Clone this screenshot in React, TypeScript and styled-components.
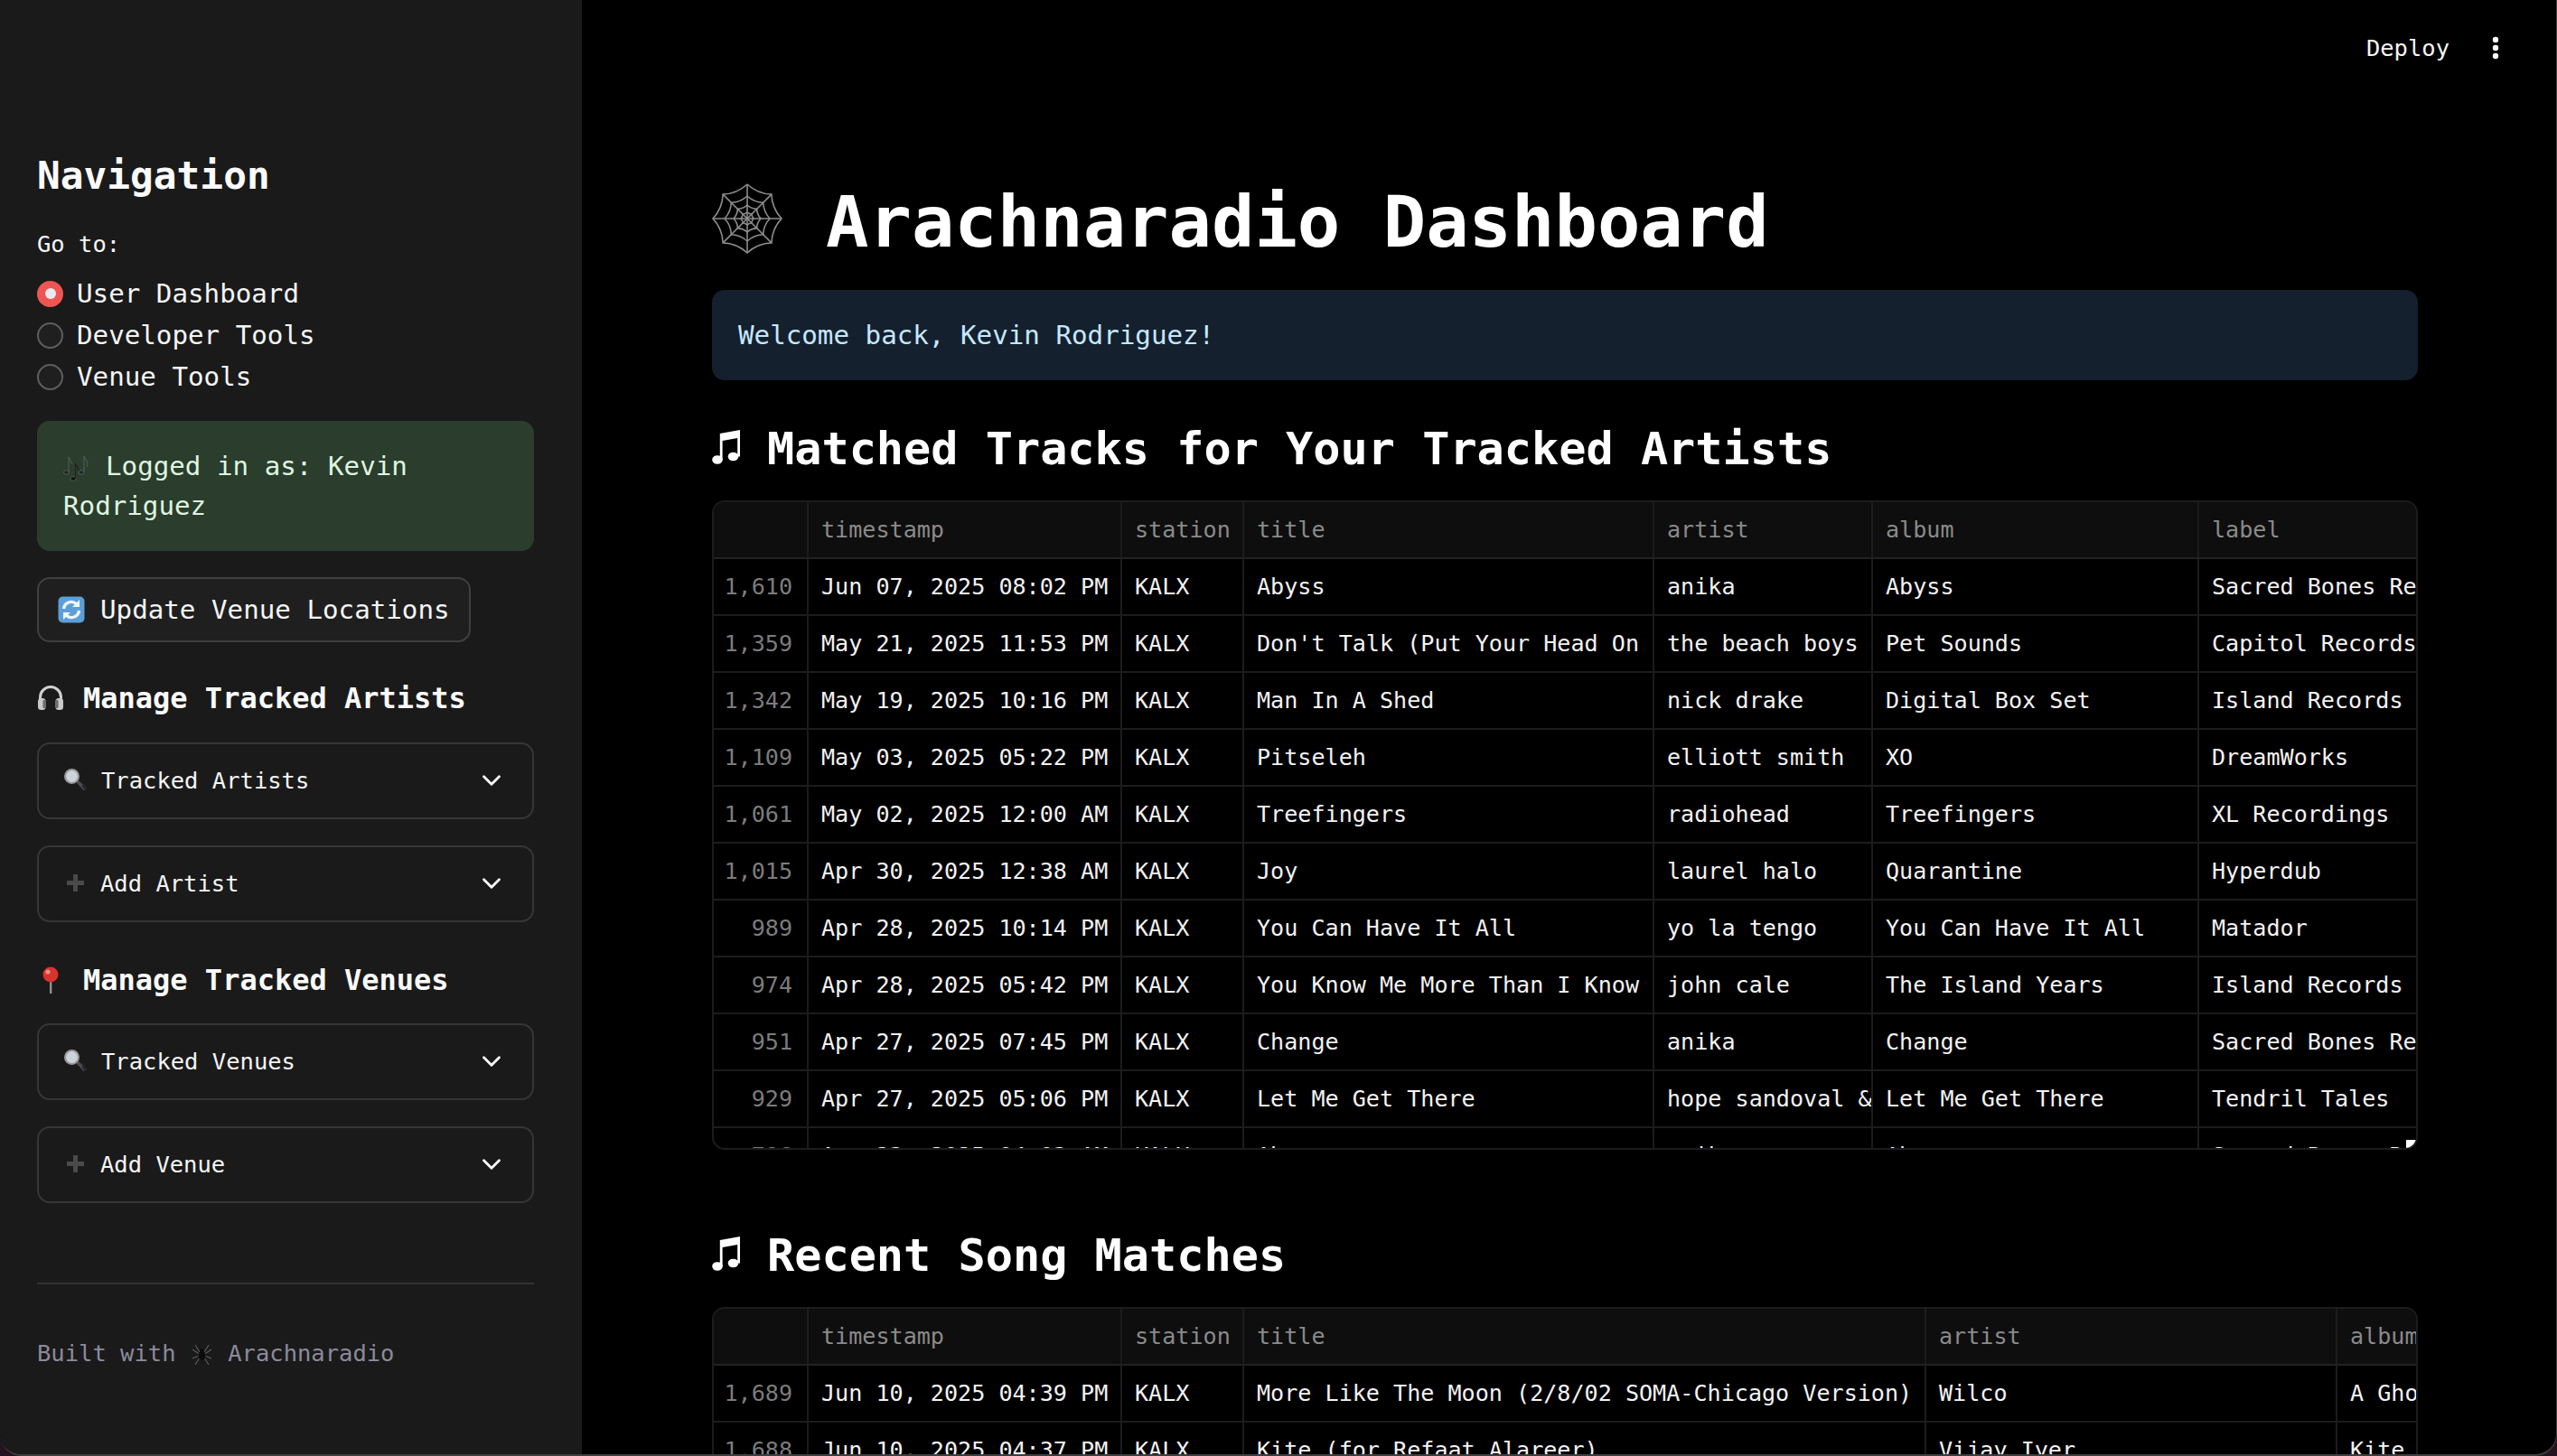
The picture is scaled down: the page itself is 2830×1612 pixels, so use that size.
import styled, { createGlobalStyle } from 'styled-components';
import { ChevronDown } from 'lucide-react';

const GlobalStyle = createGlobalStyle`
  html, body {
    margin: 0;
    height: 100%;
    background: #23141f;
    overflow: hidden;
  }
  * { box-sizing: border-box; }
  body {
    font-family: "DejaVu Sans Mono", "Liberation Mono", monospace;
    color: #f5f5f5;
  }
`;

const Frame = styled.div`
  width: 100vw;
  height: 100vh;
  display: flex;
  overflow: hidden;
  background: #000;
  border: solid #3e3e3e;
  border-width: 0 1px 2px 0;
  border-radius: 0 0 24px 24px;
`;

const Sidebar = styled.aside`
  flex: 0 0 644px;
  background: #1a1a1a;
  padding: 168px 53px 0 41px;
  display: flex;
  flex-direction: column;
`;

const NavTitle = styled.h2`
  margin: 0 0 35px;
  font-size: 42.8px;
  line-height: 52px;
  font-weight: 700;
  color: #fafafa;
`;

const GoTo = styled.div`
  font-size: 25.5px;
  line-height: 30px;
  margin-bottom: 17px;
`;

const RadioRow = styled.label`
  height: 46px;
  display: flex;
  align-items: center;
  gap: 15px;
  font-size: 29.2px;
`;

const RadioDot = styled.span<{ $on?: boolean }>`
  width: 29px;
  height: 29px;
  border-radius: 50%;
  display: grid;
  place-items: center;
  background: ${(p) => (p.$on ? '#ef5552' : '#1f1f1f')};
  border: ${(p) => (p.$on ? 'none' : '2px solid #5e5e5e')};

  &::after {
    content: '';
    display: ${(p) => (p.$on ? 'block' : 'none')};
    width: 12px;
    height: 12px;
    border-radius: 50%;
    background: #e9ebf1;
  }
`;

const LoggedIn = styled.div`
  margin-top: 26px;
  height: 144px;
  padding: 29px;
  border-radius: 14px;
  background: #2b3d2c;
  color: #dff5e0;
  font-size: 29.2px;
  line-height: 43.5px;
`;

const UpdateButton = styled.button`
  margin-top: 29px;
  align-self: flex-start;
  width: 480px;
  height: 72px;
  padding: 0 0 0 21px;
  display: flex;
  align-items: center;
  border: 2px solid #3f3f3f;
  border-radius: 14px;
  background: #1f1f1f;
  color: #f5f5f5;
  font: inherit;
  font-size: 29.2px;
`;

const SideHeading = styled.h3<{ $top: number }>`
  margin: ${(p) => p.$top}px 0 0;
  height: 44px;
  display: flex;
  align-items: center;
  font-size: 32px;
  font-weight: 700;
  color: #fafafa;
`;

const Expander = styled.div<{ $top: number }>`
  margin-top: ${(p) => p.$top}px;
  height: 85px;
  padding: 0 28px 2px 28px;
  display: flex;
  align-items: center;
  border: 2px solid #363636;
  border-radius: 14px;
  font-size: 25.5px;

  & > span { flex: 1; }
`;

const Divider = styled.hr`
  margin: 88px 0 0;
  border: 0;
  border-top: 2px solid #333;
`;

const Footer = styled.div`
  margin-top: 61px;
  height: 30px;
  display: flex;
  align-items: center;
  font-size: 25.5px;
  color: #8b8b9c;
`;

const Main = styled.main`
  flex: 1;
  min-width: 0;
  padding: 0 153px 0 144px;
  overflow: hidden;
`;

const TopBar = styled.header`
  height: 106px;
  margin-right: -153px;
  padding-right: 63px;
  display: flex;
  align-items: center;
  justify-content: flex-end;
  gap: 47px;
  font-size: 25.5px;
`;

const Title = styled.h1`
  margin: 94px 0 0;
  height: 92px;
  display: flex;
  align-items: center;
  font-size: 78.8px;
  line-height: 92px;
  font-weight: 700;
  color: #fff;
  white-space: nowrap;
`;

const Welcome = styled.div`
  margin-top: 29px;
  height: 100px;
  padding: 0 29px;
  display: flex;
  align-items: center;
  border-radius: 14px;
  background: #14202e;
  color: #c7e7fd;
  font-size: 29.2px;
`;

const SectionTitle = styled.h2<{ $top: number }>`
  margin: ${(p) => p.$top}px 0 0;
  height: 58px;
  display: flex;
  align-items: center;
  font-size: 50.2px;
  line-height: 58px;
  font-weight: 700;
  color: #fff;
`;

const GridBox = styled.div<{ $top: number }>`
  position: relative;
  margin-top: ${(p) => p.$top}px;
  height: 719px;
  border: 2px solid #1c1c1c;
  border-radius: 14px;
  overflow: hidden;
`;

const Corner = styled.span`
  position: absolute;
  right: 0;
  bottom: 0;
  width: 11px;
  height: 9px;
  background: #fff;
`;

const Grid = styled.table<{ $w: number }>`
  width: ${(p) => p.$w}px;
  border-collapse: separate;
  border-spacing: 0;
  table-layout: fixed;
  font-size: 25.1px;
`;

const Col = styled.col<{ $w: number }>`
  width: ${(p) => p.$w}px;
`;

const HeadCell = styled.th`
  height: 63px;
  padding: 0 0 0 14px;
  text-align: left;
  font-weight: 400;
  color: #8a8a8a;
  background: #0e0e0e;
  border-right: 2px solid #1c1c1c;
  border-bottom: 2px solid #222;
  white-space: nowrap;
  overflow: hidden;
`;

const Cell = styled.td`
  height: 63px;
  padding: 0 0 0 14px;
  color: #f3f3f3;
  border-right: 2px solid #1c1c1c;
  border-bottom: 2px solid #1c1c1c;
  white-space: nowrap;
  overflow: hidden;
`;

const IndexCell = styled(Cell)`
  padding: 0 16px 0 0;
  text-align: right;
  color: #7c7c7c;
`;

const Glyph = styled.svg<{ $gap?: number; $lift?: number; $lead?: number }>`
  flex: none;
  display: inline-block;
  vertical-align: middle;
  margin: 0 ${(p) => p.$gap ?? 0}px ${(p) => p.$lift ?? 0}px ${(p) => p.$lead ?? 0}px;
`;

const WebIcon = () => {
  const c = 39;
  const point = (r: number, i: number) => {
    const a = (i * Math.PI) / 4 - Math.PI / 2;
    return [c + r * Math.cos(a), c + r * Math.sin(a)];
  };
  const ring = (r: number) => {
    let d = '';
    for (let i = 0; i < 8; i++) {
      const [x, y] = point(r, i);
      const [qx, qy] = point(r * 0.78, i + 0.5);
      const [nx, ny] = point(r, i + 1);
      d += `${i === 0 ? `M${x} ${y}` : ''}Q${qx} ${qy} ${nx} ${ny}`;
    }
    return d;
  };
  return (
    <Glyph width={78} height={78} viewBox="0 0 78 78" $gap={48} $lift={8} fill="none" stroke="#8c8c8c" strokeWidth={1.6}>
      {[0, 1, 2, 3, 4, 5, 6, 7].map((i) => {
        const [x, y] = point(38, i);
        return <path key={i} d={`M39 39L${x} ${y}`} />;
      })}
      {[38, 25, 15, 7].map((r) => (
        <path key={r} d={ring(r)} />
      ))}
    </Glyph>
  );
};

const NotesIcon = ({ gap }: { gap: number }) => (
  <Glyph width={31} height={38} viewBox="0 0 31 38" $gap={gap} $lift={4} fill="#fff">
    <ellipse cx="6" cy="33" rx="5.8" ry="4.8" />
    <ellipse cx="23.5" cy="29.5" rx="5.8" ry="4.8" />
    <path d="M8.8 4L31 0V29.5h-2.8V9L11.6 12V33H8.800z" />
  </Glyph>
);

const TripleNotes = () => (
  <Glyph width={29} height={29} viewBox="0 0 29 29" $gap={18} fill="#23282a" stroke="#5d6a60" strokeWidth={0.8}>
    <ellipse cx="3.5" cy="19" rx="3" ry="2.4" />
    <path d="M6 19V2l4 8" fill="none" />
    <ellipse cx="11" cy="26" rx="3" ry="2.4" fill="#111" />
    <path d="M13.5 26V9l4 8" fill="none" stroke="#222" strokeWidth={1.2} />
    <ellipse cx="20" cy="19" rx="3" ry="2.4" />
    <path d="M23 18V1c1 4 6 6 3 12" fill="none" />
  </Glyph>
);

const RefreshIcon = () => (
  <Glyph width={30} height={30} viewBox="0 0 30 30" $gap={17}>
    <rect x="0.5" y="0.5" width="29" height="29" rx="5" fill="#5c9fd8" />
    <g fill="none" stroke="#eef5fb" strokeWidth={3.4}>
      <path d="M6.5 14a8.5 8.5 0 0 1 14-5.5" />
      <path d="M23.5 16a8.5 8.5 0 0 1-14 5.5" />
    </g>
    <path d="M24 4v8h-8zM6 26v-8h8z" fill="#eef5fb" />
  </Glyph>
);

const HeadphonesIcon = () => (
  <Glyph width={30} height={30} viewBox="0 0 30 30" $gap={21}>
    <path d="M3.5 18V14a11.5 11.5 0 0 1 23 0v4" fill="none" stroke="#d0d0d0" strokeWidth={3} />
    <rect x="1" y="15" width="8.5" height="13" rx="3.5" fill="#c9c9c9" />
    <rect x="20.5" y="15" width="8.5" height="13" rx="3.5" fill="#c9c9c9" />
    <rect x="6.5" y="17" width="3" height="9" rx="1" fill="#6a6a6a" />
    <rect x="20.5" y="17" width="3" height="9" rx="1" fill="#6a6a6a" />
  </Glyph>
);

const PinIcon = () => (
  <Glyph width={30} height={30} viewBox="0 0 30 30" $gap={21}>
    <path d="M14 13h2.4v17H14z" fill="#8f8f8f" />
    <circle cx="15" cy="9" r="8.5" fill="#d8332d" />
    <circle cx="12" cy="6" r="2.6" fill="#ef8c84" />
  </Glyph>
);

const SearchIcon = () => (
  <Glyph width={25} height={25} viewBox="0 0 25 25" $gap={16}>
    <path d="M13.5 15.5l2.5-2.5 9 8.5-3 3z" fill="#4a4a50" />
    <path d="M19.5 18.5l2-2 3.5 4.5-2.5 3z" fill="#26262a" />
    <circle cx="8.5" cy="8.5" r="8.5" fill="#9a9a9e" />
    <circle cx="8.5" cy="8.5" r="6.4" fill="#ccd3d9" />
  </Glyph>
);

const PlusIcon = () => (
  <Glyph width={40} height={19} viewBox="0 0 40 19" $gap={0} fill="#4a4a4a">
    <path d="M3 7h7V0h5v7h7v5h-7v7h-5v-7H3z" />
  </Glyph>
);

const SpiderIcon = () => (
  <Glyph width={21} height={25} viewBox="0 0 21 25" $lead={3} $gap={3} fill="none" stroke="#5a5a5e" strokeWidth={1.2}>
    <path d="M8 11L3 3M13 11l5-8M7.5 13L0 8M13.5 13L21 8M7.5 15L0 18M13.5 15L21 18M8 17L3 25M13 17l5 8" />
    <ellipse cx="10.5" cy="15" rx="4" ry="5" fill="#0c0c0c" stroke="none" />
    <circle cx="10.5" cy="9.5" r="2.4" fill="#0c0c0c" stroke="none" />
  </Glyph>
);

const KebabIcon = () => (
  <Glyph width={8} height={26} viewBox="0 0 8 26" fill="#fff">
    <circle cx="4" cy="4" r="3.2" />
    <circle cx="4" cy="13" r="3.2" />
    <circle cx="4" cy="22" r="3.2" />
  </Glyph>
);

const matchedColumns = [105, 347, 135, 454, 242, 361, 400];
const recentColumns = [105, 347, 135, 755, 455, 400];

const matchedHead = ['', 'timestamp', 'station', 'title', 'artist', 'album', 'label'];
const recentHead = ['', 'timestamp', 'station', 'title', 'artist', 'album'];

const matchedRows = [
  ['1,610', 'Jun 07, 2025 08:02 PM', 'KALX', 'Abyss', 'anika', 'Abyss', 'Sacred Bones Records'],
  ['1,359', 'May 21, 2025 11:53 PM', 'KALX', "Don't Talk (Put Your Head On", 'the beach boys', 'Pet Sounds', 'Capitol Records'],
  ['1,342', 'May 19, 2025 10:16 PM', 'KALX', 'Man In A Shed', 'nick drake', 'Digital Box Set', 'Island Records'],
  ['1,109', 'May 03, 2025 05:22 PM', 'KALX', 'Pitseleh', 'elliott smith', 'XO', 'DreamWorks'],
  ['1,061', 'May 02, 2025 12:00 AM', 'KALX', 'Treefingers', 'radiohead', 'Treefingers', 'XL Recordings'],
  ['1,015', 'Apr 30, 2025 12:38 AM', 'KALX', 'Joy', 'laurel halo', 'Quarantine', 'Hyperdub'],
  ['989', 'Apr 28, 2025 10:14 PM', 'KALX', 'You Can Have It All', 'yo la tengo', 'You Can Have It All', 'Matador'],
  ['974', 'Apr 28, 2025 05:42 PM', 'KALX', 'You Know Me More Than I Know', 'john cale', 'The Island Years', 'Island Records'],
  ['951', 'Apr 27, 2025 07:45 PM', 'KALX', 'Change', 'anika', 'Change', 'Sacred Bones Records'],
  ['929', 'Apr 27, 2025 05:06 PM', 'KALX', 'Let Me Get There', 'hope sandoval & the warm inventions', 'Let Me Get There', 'Tendril Tales'],
  ['786', 'Apr 23, 2025 04:03 AM', 'KALX', 'Abyss', 'anika', 'Abyss', 'Sacred Bones Records'],
];

const recentRows = [
  ['1,689', 'Jun 10, 2025 04:39 PM', 'KALX', 'More Like The Moon (2/8/02 SOMA-Chicago Version)', 'Wilco', 'A Ghost Is Born'],
  ['1,688', 'Jun 10, 2025 04:37 PM', 'KALX', 'Kite (for Refaat Alareer)', 'Vijay Iyer', 'Kite'],
];

interface TableProps {
  top: number;
  columns: number[];
  head: string[];
  rows: string[][];
  corner?: boolean;
}

const DataTable = ({ top, columns, head, rows, corner }: TableProps) => (
  <GridBox $top={top}>
    <Grid $w={columns.reduce((sum, width) => sum + width, 0)}>
      <colgroup>
        {columns.map((width, index) => (
          <Col key={index} $w={width} />
        ))}
      </colgroup>
      <thead>
        <tr>
          {head.map((name, index) => (
            <HeadCell key={index}>{name}</HeadCell>
          ))}
        </tr>
      </thead>
      <tbody>
        {rows.map((row) => (
          <tr key={row[0]}>
            {row.map((value, index) =>
              index === 0 ? <IndexCell key={index}>{value}</IndexCell> : <Cell key={index}>{value}</Cell>,
            )}
          </tr>
        ))}
      </tbody>
    </Grid>
    {corner && <Corner />}
  </GridBox>
);

const Chevron = () => <ChevronDown size={34} strokeWidth={2} color="#fafafa" />;

export default function App() {
  return (
    <>
      <GlobalStyle />
      <Frame>
        <Sidebar>
          <NavTitle>Navigation</NavTitle>
          <GoTo>Go to:</GoTo>
          <RadioRow>
            <RadioDot $on />
            User Dashboard
          </RadioRow>
          <RadioRow>
            <RadioDot />
            Developer Tools
          </RadioRow>
          <RadioRow>
            <RadioDot />
            Venue Tools
          </RadioRow>
          <LoggedIn>
            <TripleNotes />
            Logged in as: Kevin Rodriguez
          </LoggedIn>
          <UpdateButton>
            <RefreshIcon />
            Update Venue Locations
          </UpdateButton>

          <SideHeading $top={40}>
            <HeadphonesIcon />
            Manage Tracked Artists
          </SideHeading>
          <Expander $top={27}>
            <SearchIcon />
            <span>Tracked Artists</span>
            <Chevron />
          </Expander>
          <Expander $top={29}>
            <PlusIcon />
            <span>Add Artist</span>
            <Chevron />
          </Expander>

          <SideHeading $top={42}>
            <PinIcon />
            Manage Tracked Venues
          </SideHeading>
          <Expander $top={26}>
            <SearchIcon />
            <span>Tracked Venues</span>
            <Chevron />
          </Expander>
          <Expander $top={29}>
            <PlusIcon />
            <span>Add Venue</span>
            <Chevron />
          </Expander>

          <Divider />
          <Footer>
            Built with&nbsp;
            <SpiderIcon />
            &nbsp;Arachnaradio
          </Footer>
        </Sidebar>

        <Main>
          <TopBar>
            Deploy
            <KebabIcon />
          </TopBar>
          <Title>
            <WebIcon />
            Arachnaradio Dashboard
          </Title>
          <Welcome>Welcome back, Kevin Rodriguez!</Welcome>

          <SectionTitle $top={47}>
            <NotesIcon gap={30} />
            Matched Tracks for Your Tracked Artists
          </SectionTitle>
          <DataTable top={28} columns={matchedColumns} head={matchedHead} rows={matchedRows} corner />

          <SectionTitle $top={88}>
            <NotesIcon gap={30} />
            Recent Song Matches
          </SectionTitle>
          <DataTable top={28} columns={recentColumns} head={recentHead} rows={recentRows} />
        </Main>
      </Frame>
    </>
  );
}
